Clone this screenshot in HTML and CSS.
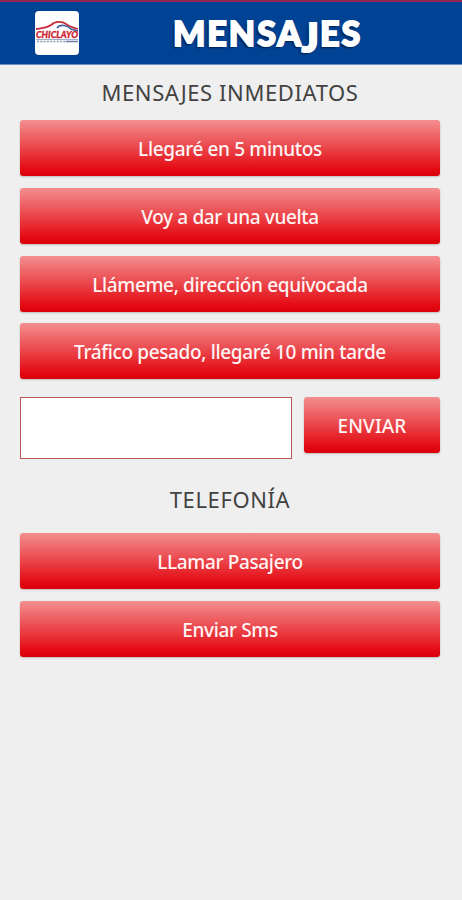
FILE: index.html
```html
<!DOCTYPE html>
<html lang="es">
<head>
<meta charset="utf-8">
<title>Mensajes</title>
<link rel="stylesheet" href="styles.css">
</head>
<body>
<header class="bar">
  <svg class="logo" viewBox="0 0 44 44" role="img" aria-label="Chiclayo">
    <rect width="44" height="44" rx="4" fill="#fff"/>
    <path d="M1 18 C8 17 12 17 16 14 C20 10 27 10 31 13 Q35 16 43 18" fill="none" stroke="#c92b38" stroke-width="1.8"/>
    <path d="M22 17 Q24 14 29 14.5 Q33 15 36 18 L43 20" fill="none" stroke="#41639f" stroke-width="1.7"/>
    <text class="logo-name" x="1" y="27" textLength="42" lengthAdjust="spacingAndGlyphs">CHICLAYO</text>
    <path d="M1 28.5 H43" stroke="#8a9bbd" stroke-width="0.8"/>
    <path d="M2 30.5 H31" stroke="#8796b5" stroke-width="1.4" stroke-dasharray="2 1.3"/>
    <path d="M31 30.5 H43" stroke="#6d82ab" stroke-width="1.6"/>
  </svg>
  <h1 class="title">MENSA<span class="drop">J</span>ES</h1>
</header>
<main class="content">
  <h2 class="heading">MENSAJES INMEDIATOS</h2>
  <div class="stack">
    <button class="btn">Llegaré en 5 minutos</button>
    <button class="btn">Voy a dar una vuelta</button>
    <button class="btn">Llámeme, dirección equivocada</button>
    <button class="btn">Tráfico pesado, llegaré 10 min tarde</button>
  </div>
  <div class="compose">
    <input class="field" type="text" aria-label="Mensaje">
    <button class="btn send">ENVIAR</button>
  </div>
  <h2 class="heading phone">TELEFONÍA</h2>
  <div class="stack">
    <button class="btn">LLamar Pasajero</button>
    <button class="btn">Enviar Sms</button>
  </div>
</main>
</body>
</html>
```
FILE: styles.css
```css
* { box-sizing: border-box; }
body {
  margin: 0;
  min-height: 900px;
  background: #efefef;
  font-family: "Noto Sans", sans-serif;
}
.bar {
  display: flex;
  align-items: flex-start;
  height: 65px;
  padding: 9px 0 0 35px;
  background: #004394;
  border-top: 2px solid #922650;
  border-bottom: 1px solid #6f91bd;
}
.logo { width: 44px; height: 44px; flex: none; overflow: visible; }
.logo-name {
  font: italic 900 10px "Lato", sans-serif;
  fill: #cf2433;
  stroke: #cf2433;
  stroke-width: 0.3px;
}
.title {
  margin: 0 0 0 94px;
  font: 900 34px/44px "Lato", sans-serif;
  letter-spacing: 2px;
  color: #fff;
  -webkit-text-stroke: 1.8px #fff;
  text-shadow: -2px 2px 2px #001d48;
}
.drop {
  display: inline-block;
  line-height: 1;
  transform: translateY(4px) scale(1.15);
}
.content { padding: 0 22px 0 20px; }
.heading {
  margin: 0;
  height: 55px;
  font-size: 22px;
  font-weight: 400;
  line-height: 54px;
  letter-spacing: 0.6px;
  text-align: center;
  color: #424242;
}
.stack { display: grid; gap: 11.8px; }
.btn {
  width: 100%;
  height: 56px;
  padding: 2px 0 0;
  border: 0;
  border-radius: 3px;
  background: linear-gradient(#f38e8f, #ea4449 50%, #e40a13 88%, #d90009);
  box-shadow: 0 1px 2px #bbb;
  font: 500 19px/54px "Noto Sans", sans-serif;
  letter-spacing: -0.36px;
  color: #fff5f5;
  white-space: nowrap;
}
.compose {
  display: flex;
  align-items: flex-start;
  gap: 12px;
  margin-top: 17.6px;
}
.field {
  width: 272px;
  height: 62px;
  border: 1px solid #b85757;
  background: #fff;
}
.send { width: 136px; letter-spacing: 0.1px; }
.phone { height: 74px; line-height: 80px; }
```
